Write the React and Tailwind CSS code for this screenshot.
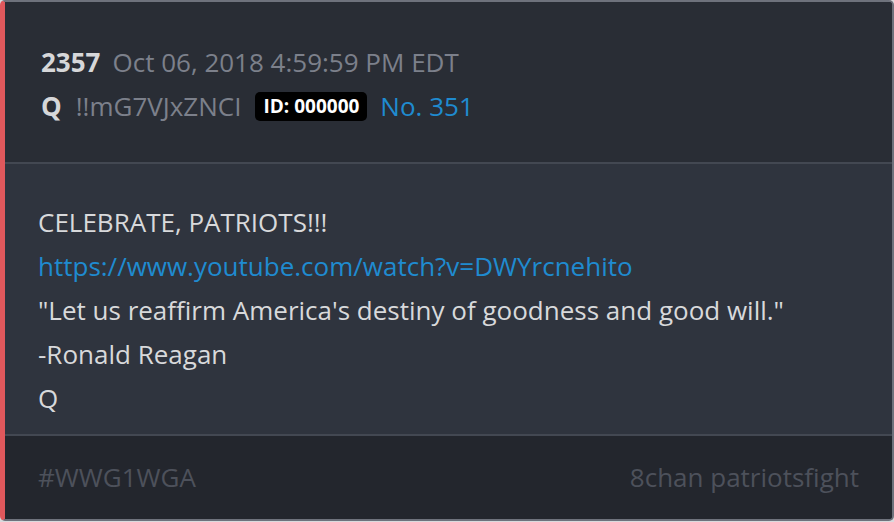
export default function App() {
  const font = { fontFamily: '"Open Sans", "Noto Sans", sans-serif' };
  return (
    <div className="w-[894px] h-[522px] bg-[#d9dadd]" style={font}>
      <div className="w-[894px] h-[521px] flex flex-col rounded-[5px] overflow-hidden border-t-2 border-r-2 border-b-2 border-[#6e727c] border-l-[5px] border-l-[#e0585c] bg-[#292d35]">
        {/* Header */}
        <div className="h-[160px] shrink-0 bg-[#292d35] pl-[36px] pt-[38px] text-[26px] leading-[44px]">
          <div className="flex items-baseline">
            <span className="font-bold text-[#d6d7d9]">2357</span>
            <span className="ml-[12px] text-[#7c808b]">Oct 06, 2018 4:59:59 PM EDT</span>
          </div>
          <div className="flex items-center">
            <span className="font-bold text-[#d6d7d9]">Q</span>
            <span className="ml-[14px] text-[#7c808b]">!!mG7VJxZNCI</span>
            <span className="ml-[14px] bg-black text-white font-bold text-[19px] leading-[29px] px-[8px] rounded-[5px]">ID: 000000</span>
            <span className="ml-[13px] text-[#1f8bd0]">No. 351</span>
          </div>
        </div>
        <div className="h-[2px] bg-[#434852] shrink-0" />

        {/* Body */}
        <div className="h-[270px] shrink-0 bg-[#2f343e] pl-[33px] pt-[36px] text-[26px] leading-[44px] text-[#d8d9db]">
          <div>CELEBRATE, PATRIOTS!!!</div>
          <div className="text-[#1f8bd0]">https://www.youtube.com/watch?v=DWYrcnehito</div>
          <div>"Let us reaffirm America's destiny of goodness and good will."</div>
          <div>-Ronald Reagan</div>
          <div>Q</div>
        </div>
        <div className="h-[2px] bg-[#434852] shrink-0" />

        {/* Footer */}
        <div className="flex-1 bg-[#23262d] pl-[33px] pr-[33px] flex items-center justify-between text-[26px] text-[#4d515b]">
          <span>#WWG1WGA</span>
          <span>8chan patriotsfight</span>
        </div>
      </div>
    </div>
  );
}
